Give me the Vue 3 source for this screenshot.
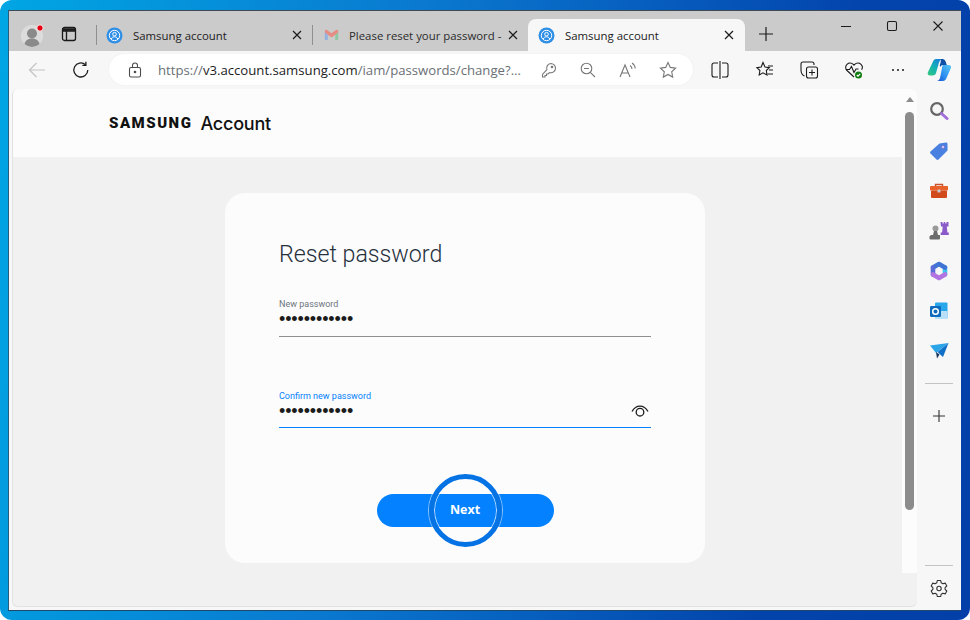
<script setup>
const rightTools = ['split', 'fav', 'coll', 'health', 'more']
</script>

<template>
  <div class="desktop">
    <div class="window">
      <div class="titlebar">
        <div class="avatar">
          <svg width="24" height="24" viewBox="0 0 24 24">
            <circle cx="11" cy="13" r="11" fill="#dcdcdc" />
            <circle cx="11" cy="10.5" r="5" fill="#8a8a8a" />
            <path d="M3.5 21c1-4 4-5.500 7.500-5.500s6.500 1.500 7.500 5.500a11 11 0 0 1-15 0z" fill="#8a8a8a" />
            <circle cx="19" cy="5" r="3.200" fill="#e60012" stroke="#f2f2f2" stroke-width="1" />
          </svg>
        </div>
        <svg class="workspace" width="16" height="16" viewBox="0 0 16 16" fill="none" stroke="#1a1a1a" stroke-width="1.300">
          <rect x="1.500" y="1.500" width="13" height="13" rx="2" />
          <path d="M1.500 5h13M5.500 5v9.500" />
          <path d="M1.500 3.500h13" stroke-width="2.500" />
        </svg>
        <i class="divider first"></i>
        <div class="tab tab-one">
          <svg class="favicon" width="17" height="17" viewBox="0 0 17 17">
            <circle cx="8.500" cy="8.500" r="8" fill="#2f8fe6" />
            <circle cx="8.500" cy="8.500" r="5.200" fill="none" stroke="#fff" stroke-width="1" />
            <circle cx="8.500" cy="7.200" r="1.800" fill="none" stroke="#fff" stroke-width="1" />
            <path d="M5.300 12c.6-1.600 1.800-2.200 3.200-2.200s2.600.6 3.200 2.200" fill="none" stroke="#fff" stroke-width="1" />
          </svg>
          <span class="tab-title">Samsung account</span>
          <svg class="close" width="12" height="12" viewBox="0 0 12 12" stroke="#1c1c1c" stroke-width="1.200"><path d="M2 2l8 8M10 2l-8 8" /></svg>
        </div>
        <i class="divider"></i>
        <div class="tab tab-two">
          <svg class="gmail" width="15" height="12" viewBox="0 0 15 12">
            <path d="M.8 2.500V10c0 .6.400 1 1 1h2V5.800z" fill="#94b2e0" />
            <path d="M14.200 2.500V10c0 .6-.4 1-1 1h-2V5.800z" fill="#8fc8a0" />
            <path d="M.8 3.200V2a1.400 1.400 0 0 1 2.300-1L7.500 4.200 11.900 1a1.400 1.400 0 0 1 2.300 1v1.200L11.200 5.800 7.500 8.600 3.800 5.800z" fill="#e58d83" />
          </svg>
          <span class="tab-title fade">Please reset your password -</span>
          <svg class="close" width="12" height="12" viewBox="0 0 12 12" stroke="#1c1c1c" stroke-width="1.200"><path d="M2 2l8 8M10 2l-8 8" /></svg>
        </div>
        <div class="tab tab-active">
          <svg class="favicon" width="17" height="17" viewBox="0 0 17 17">
            <circle cx="8.500" cy="8.500" r="8" fill="#2f8fe6" />
            <circle cx="8.500" cy="8.500" r="5.200" fill="none" stroke="#fff" stroke-width="1" />
            <circle cx="8.500" cy="7.200" r="1.800" fill="none" stroke="#fff" stroke-width="1" />
            <path d="M5.300 12c.6-1.600 1.800-2.200 3.200-2.200s2.600.6 3.200 2.200" fill="none" stroke="#fff" stroke-width="1" />
          </svg>
          <span class="tab-title">Samsung account</span>
          <svg class="close" width="12" height="12" viewBox="0 0 12 12" stroke="#1c1c1c" stroke-width="1.200"><path d="M2 2l8 8M10 2l-8 8" /></svg>
        </div>
        <svg class="newtab" width="16" height="16" viewBox="0 0 16 16" stroke="#1c1c1c" stroke-width="1.200"><path d="M8 1v14M1 8h14" /></svg>
        <div class="caption">
          <svg width="12" height="12" viewBox="0 0 12 12" stroke="#1c1c1c" stroke-width="1.100"><path d="M1 6.500h10" /></svg>
          <svg width="12" height="12" viewBox="0 0 12 12" fill="none" stroke="#1c1c1c" stroke-width="1.100"><rect x="1.500" y="1.500" width="9" height="9" rx="1.500" /></svg>
          <svg width="12" height="12" viewBox="0 0 12 12" stroke="#1c1c1c" stroke-width="1.100"><path d="M1.500 1.500l9 9M10.500 1.500l-9 9" /></svg>
        </div>
      </div>

      <div class="toolbar">
        <svg class="back" width="18" height="18" viewBox="0 0 18 18" fill="none" stroke="#c4c4c4" stroke-width="1.200"><path d="M17 9H1.500M8.500 2 1.500 9l7 7" /></svg>
        <svg class="reload" width="18" height="18" viewBox="0 0 18 18" fill="none" stroke="#1c1c1c" stroke-width="1.300"><path d="M15.800 9A7 7 0 1 1 13.500 3.800" /><path d="M13.900.8v3.500h-3.500" /></svg>
        <div class="address">
          <svg class="lock" width="14" height="16" viewBox="0 0 14 16" fill="none" stroke="#4c4c4c" stroke-width="1.100">
            <rect x="1.500" y="5.500" width="11" height="9.500" rx="1.500" />
            <path d="M4.500 5.500V3.500a2.500 2.500 0 0 1 5 0v2" />
            <circle cx="7" cy="10" r=".8" fill="#4c4c4c" />
          </svg>
          <span class="url"><span class="dim">https://</span>v3.account.samsung.com<span class="dim">/iam/passwords/change?...</span></span>
          <svg class="addr-icon key" width="16" height="16" viewBox="0 0 16 16" fill="none" stroke="#777" stroke-width="1.100"><path d="M9.800 1.500a4.700 4.700 0 0 1 4.700 4.700 4.700 4.700 0 0 1-6 4.400L7 12H5.500v1.500H4V15H1.500v-2.500l4.400-4.800a4.700 4.700 0 0 1 3.900-6.200z" /><circle cx="11" cy="5" r=".8" /></svg>
          <svg class="addr-icon zoomout" width="16" height="16" viewBox="0 0 16 16" fill="none" stroke="#777" stroke-width="1.100"><circle cx="6.500" cy="6.500" r="5.300" /><path d="M10.300 10.300 15 15M4 6.500h5" /></svg>
          <svg class="addr-icon aloud" width="18" height="16" viewBox="0 0 18 16" fill="none" stroke="#777" stroke-width="1.100"><path d="M1 15 6 3l5 12M2.800 11h6.400M11 3.500c1.300.8 2 2 2 3.400M13 1c2 1.300 3.200 3.200 3.200 5.600" /></svg>
          <svg class="addr-icon star" width="18" height="18" viewBox="0 0 18 18" fill="none" stroke="#777" stroke-width="1.100"><path d="m9 1.500 2.300 4.900 5.300.7-3.900 3.700 1 5.300L9 13.500l-4.700 2.600 1-5.300-3.900-3.700 5.300-.7z" /></svg>
        </div>
        <div class="tools">
          <svg v-for="t in rightTools" :key="t" width="20" height="20" viewBox="0 0 20 20" fill="none" stroke="#1c1c1c" stroke-width="1.100">
            <template v-if="t === 'split'">
              <path d="M8 3H4a2 2 0 0 0-2 2v10a2 2 0 0 0 2 2h4M12 3h4a2 2 0 0 1 2 2v10a2 2 0 0 1-2 2h-4M10 1v18" />
            </template>
            <template v-else-if="t === 'fav'">
              <path d="M8 2.500 10 7l4.300.6-3 2.900.7 4.500L8 12.800 4.200 15l.7-4.500-3-2.900L6.200 7z" />
              <path d="M13 6h5M14 10h4M12.500 14h5.500" />
            </template>
            <template v-else-if="t === 'coll'">
              <rect x="7.500" y="7" width="11" height="11" rx="2" />
              <path d="M13 9.500v6M10 12.500h6" />
              <path d="M15 5V4a2 2 0 0 0-2-2H4a2 2 0 0 0-2 2v6c0 3 1 5 3.500 6" />
            </template>
            <template v-else-if="t === 'health'">
              <path d="M10 17 3 10.500a4.300 4.300 0 0 1 0-6.200 4.500 4.500 0 0 1 6.300.1l.7.7.7-.7a4.500 4.500 0 0 1 6.300-.1 4.300 4.300 0 0 1 .6 5.400" />
              <path d="M2 9.500h3.500l2-3 2.500 6 2-3.500h2.500" />
              <circle cx="14.500" cy="15" r="3.500" fill="#107c10" stroke="none" />
              <path d="m12.800 15 1.200 1.200 2.200-2.300" stroke="#fff" />
            </template>
            <template v-else>
              <circle cx="5" cy="10" r="1" fill="#1c1c1c" stroke="none" />
              <circle cx="10" cy="10" r="1" fill="#1c1c1c" stroke="none" />
              <circle cx="15" cy="10" r="1" fill="#1c1c1c" stroke="none" />
            </template>
          </svg>
        </div>
        <svg class="copilot" width="25" height="24" viewBox="0 0 25 24">
          <defs>
            <linearGradient id="cpA" x1="0" y1="1" x2=".8" y2="0"><stop offset="0" stop-color="#35c87a" /><stop offset=".55" stop-color="#12b0b8" /><stop offset="1" stop-color="#1a7fd8" /></linearGradient>
            <linearGradient id="cpB" x1="1" y1="0" x2="0" y2="1"><stop offset="0" stop-color="#58c8f5" /><stop offset=".6" stop-color="#2a8cf0" /><stop offset="1" stop-color="#1450c8" /></linearGradient>
          </defs>
          <path d="M9 1h6c-1.500.5-2.500 2-3 3.500L9 15c-.6 1.800-2 2.500-3.500 2.500H3C1.200 17.500.2 16 .8 14.500L6 3.500C6.600 2 7.500 1 9 1z" fill="url(#cpA)" />
          <path d="M13.500 1h2c1.500 0 2.500 1 3 2.300L19.800 7H16c-1.500 0-2.200.9-2.500 2l-.8-1.500 1-3.500c.2-1.200.3-2.300-.2-3z" fill="#0f4fa8" />
          <path d="M16 7h5.500c1.800 0 3 1 2.500 2.800l-4.500 10.300c-.7 1.800-2 2.900-3.500 2.900H9.500c1.800 0 3-1 3.500-2.900l2-10.100c.2-1.300.4-2.400 1-3z" fill="url(#cpB)" />
        </svg>
      </div>

      <div class="main">
        <div class="page">
          <div class="viewport">
            <div class="content">
              <header class="site-header">
                <span class="logo">SAMSUNG</span>
                <span class="logo-sub">Account</span>
              </header>
              <section class="stage">
                <form class="card" @submit.prevent>
                  <h1>Reset password</h1>
                  <label class="field">
                    <span class="field-label">New password</span>
                    <input type="password" value="123456789012" readonly />
                  </label>
                  <label class="field focus">
                    <span class="field-label">Confirm new password</span>
                    <input type="password" value="123456789012" readonly />
                    <svg class="eye" width="18" height="12" viewBox="0 0 18 12" fill="none" stroke="#1c1c1c" stroke-width="1.300">
                      <path d="M1 6.500C3 3 5.800 1.200 9 1.200S15 3 17 6.500" />
                      <circle cx="9" cy="7.200" r="3.800" />
                    </svg>
                  </label>
                  <div class="actions">
                    <button class="next" type="submit">Next</button>
                    <span class="ring"></span>
                  </div>
                </form>
              </section>
            </div>
            <div class="scroll">
              <i class="arrow"></i>
              <i class="thumb"></i>
            </div>
          </div>
        </div>

        <aside class="sidebar">
          <svg width="20" height="20" viewBox="0 0 20 20" fill="none">
            <circle cx="8" cy="8" r="5.800" stroke="#666" stroke-width="2.200" />
            <path d="m12.500 12.500 5.500 5" stroke="#a06fd8" stroke-width="3" stroke-linecap="round" />
          </svg>
          <svg width="20" height="20" viewBox="0 0 20 20">
            <path d="M10.500 2.500 17 1.500c1 0 1.500.5 1.500 1.500v6.500L9.500 18.500c-.6.600-1.400.6-2 0L1.500 12.500c-.6-.6-.6-1.400 0-2z" fill="#4a80e0" />
            <circle cx="14" cy="6" r="1.500" fill="#d8e4fa" stroke="#8458c8" stroke-width=".6" />
          </svg>
          <svg width="20" height="20" viewBox="0 0 20 20">
            <path d="M6.500 5V3.500h7V5" fill="none" stroke="#c8502a" stroke-width="1.400" />
            <rect x="1" y="5" width="18" height="4.500" rx=".8" fill="#e8622a" />
            <rect x="2" y="9.500" width="16" height="7.500" rx="1" fill="#d04a1c" />
            <rect x="8.500" y="8.500" width="3" height="3" rx=".6" fill="#c8c8d4" />
          </svg>
          <svg width="20" height="20" viewBox="0 0 20 20">
            <circle cx="6.500" cy="7.500" r="3" fill="#9a9a9a" />
            <path d="M5 10h3l1 4h2v3.500a1 1 0 0 1-1 1H1.500a1 1 0 0 1-1-1V15.500c0-.8 1.200-1.500 3.500-1.500z" fill="#6c6c6c" />
            <path d="M11.500 1h2v1.500h1.200V1h1.600v1.500h1.200V1h2v4.500h-1.700l.6 6h1.400V14h-8.100v-2.500h1.400l.6-6h-1.700z" fill="#8a5bc8" />
          </svg>
          <svg width="20" height="20" viewBox="0 0 20 20" fill="none" stroke-width="4.600" stroke-linecap="round" stroke-linejoin="round">
            <path d="M16 6.500v7" stroke="#3cc4ee" />
            <path d="M4 6.500 10 3l6 3.500" stroke="#3f74d4" />
            <path d="M4 6.500v7" stroke="#5a6cd8" />
            <path d="M16 13.500 10 17l-6-3.500" stroke="#b274e0" />
          </svg>
          <svg width="20" height="20" viewBox="0 0 20 20">
            <rect x="6" y="1.500" width="12.500" height="16" rx="1" fill="#28a8ea" />
            <path d="M6 10h12.500v7a1 1 0 0 1-1 1H7a1 1 0 0 1-1-1z" fill="#b8e0f8" />
            <rect x="1" y="5" width="11" height="11" rx="1.200" fill="#0f6cbd" />
            <circle cx="6.500" cy="10.500" r="2.800" fill="none" stroke="#fff" stroke-width="1.500" />
          </svg>
          <svg width="20" height="20" viewBox="0 0 20 20">
            <path d="M1 4.500 19.500 2 7 12z" fill="#2ba4e8" />
            <path d="M19.500 2 14 16l-5.500-5z" fill="#1070c8" />
            <path d="m7 11 1 6.500 2.500-4z" fill="#16365c" />
          </svg>
          <i class="side-rule rule-a"></i>
          <svg class="side-plus" width="14" height="14" viewBox="0 0 14 14" stroke="#333" stroke-width="1.100"><path d="M7 1v12M1 7h12" /></svg>
          <i class="side-rule rule-b"></i>
          <svg class="gear" width="18" height="18" viewBox="0 0 18 18" fill="none" stroke="#333" stroke-width="1.100">
            <path d="M7.300 1.500h3.400l.5 2.300 1.700 1 2.300-.7 1.600 2.900-1.700 1.600v1.800l1.700 1.600-1.600 2.900-2.300-.7-1.700 1-.5 2.300H7.300l-.5-2.300-1.700-1-2.300.7-1.600-2.900 1.700-1.600V8.600L1.200 7l1.600-2.900 2.300.7 1.700-1z" stroke-linejoin="round" />
            <circle cx="9" cy="9.500" r="2.200" />
          </svg>
        </aside>
      </div>
    </div>
  </div>
</template>

<style>
html, body { margin: 0; background: #fff; }
</style>

<style scoped>
.desktop {
  box-sizing: border-box;
  width: 970px;
  height: 620px;
  padding: 10px 9px 10px 8px;
  border-radius: 12px;
  background: linear-gradient(100deg, #00a6e4 0%, #0a78cf 40%, #0344ac 80%, #033fa8 100%);
  font-family: "Open Sans", "Noto Sans", sans-serif;
  overflow: hidden;
}
.window {
  height: 100%;
  display: flex;
  flex-direction: column;
  background: #f7f7f7;
  border-top: 1px solid #3f4a55;
  border-left: 1px solid #2a5c7c;
  box-sizing: border-box;
  box-shadow: 0 1px 0 #1d4a6a;
}
.titlebar {
  height: 40px;
  flex: none;
  display: flex;
  align-items: flex-end;
  background: #cbcbcb;
  position: relative;
}
.avatar { width: 24px; height: 24px; margin: 0 0 4px 12px; }
.workspace { margin: 0 0 9px 16px; }
.divider { width: 1px; height: 20px; background: #8f8f8f; margin-bottom: 6px; flex: none; }
.divider.first { margin-left: 19px; }
.tab {
  height: 32px;
  display: flex;
  align-items: center;
  box-sizing: border-box;
  flex: none;
}
.tab-one { width: 215px; padding: 0 9px 0 9px; }
.tab-two { width: 215px; padding: 0 9px 0 11px; }
.tab-active {
  width: 217px;
  padding: 0 10px 0 10px;
  background: #f7f7f7;
  border-radius: 8px 8px 0 0;
}
.favicon { flex: none; }
.gmail { flex: none; margin-right: 10px; }
.tab-title {
  font-size: 11.400px;
  color: #1c1c1c;
  margin-left: 10px;
  flex: 1;
  white-space: nowrap;
  overflow: hidden;
}
.gmail + .tab-title { margin-left: 0; }
.fade { color: #2b2b2b; }
.close { flex: none; }
.newtab { margin: 0 0 9px 13px; }
.caption {
  position: absolute;
  right: 17px;
  top: 9px;
  display: flex;
  gap: 34px;
}
.toolbar {
  height: 38px;
  padding-bottom: 1px;
  box-sizing: border-box;
  flex: none;
  display: flex;
  align-items: center;
  background: #f7f7f7;
}
.back { margin-left: 19px; }
.reload { margin-left: 26px; }
.address {
  margin-left: 19px;
  width: 584px;
  height: 31px;
  border-radius: 16px;
  background: #fff;
  display: flex;
  align-items: center;
  box-shadow: 0 0 2px rgba(0, 0, 0, .06);
  position: relative;
  flex: none;
}
.lock { margin-left: 19px; flex: none; }
.url {
  margin-left: 16px;
  font-size: 13.170px;
  color: #1c1c1c;
  white-space: nowrap;
  width: 371px;
  flex: none;
}
.dim { color: #6a6f75; }
.addr-icon { flex: none; }
.key { margin-left: 12px; }
.zoomout { margin-left: 23px; }
.aloud { margin-left: 23px; }
.star { margin-left: 22px; }
.tools {
  display: flex;
  gap: 24.500px;
  margin-left: 17px;
}
.copilot { margin-left: 19px; }
.main { flex: 1; display: flex; min-height: 0; }
.page {
  flex: none;
  width: 905px;
  margin: 0 0 3px 3px;
  background: #f1f1f1;
  border: 1px solid #e2e2e2;
  border-top: none;
  border-right: none;
  border-radius: 6px;
  box-sizing: border-box;
  overflow: hidden;
}
.viewport { height: 484px; display: flex; }
.content { flex: 1; display: flex; flex-direction: column; min-width: 0; }
.site-header {
  height: 68px;
  background: #fcfcfc;
  display: flex;
  align-items: center;
  padding-left: 96px;
  flex: none;
}
.logo {
  font-family: Roboto, sans-serif;
  font-weight: 900;
  font-size: 15px;
  letter-spacing: 1.500px;
  color: #111;
}
.logo-sub {
  font-family: Inter, sans-serif;
  font-weight: 500;
  font-size: 18px;
  color: #111;
  margin-left: 8px;
  letter-spacing: -.2px;
}
.stage { flex: 1; padding: 36px 0 0 212px; }
.card {
  width: 480px;
  height: 370px;
  box-sizing: border-box;
  border-radius: 20px;
  background: #fcfcfc;
  padding: 45px 54px 0;
}
h1 {
  margin: 0;
  font-family: Roboto, sans-serif;
  font-weight: 300;
  font-size: 23.200px;
  line-height: 32px;
  color: #25303c;
}
.field {
  display: block;
  position: relative;
  height: 41px;
  border-bottom: 1px solid #8f8f8f;
  margin-top: 25px;
}
.field.focus { height: 40px; border-bottom-color: #0381fe; margin-top: 50px; }
.field-label {
  display: block;
  font-family: Roboto, sans-serif;
  font-size: 9px;
  line-height: 12px;
  padding-top: 3px;
  color: #6d7580;
}
.focus .field-label { color: #0381fe; }
input {
  display: block;
  width: 100%;
  border: none;
  outline: none;
  background: transparent;
  padding: 0;
  margin: 1px 0 0;
  height: 16px;
  font-family: "Liberation Sans", sans-serif;
  font-size: 18px;
  letter-spacing: -.13px;
  color: #1c1c1c;
}
.eye { position: absolute; right: 2px; bottom: 10px; }
.actions {
  position: relative;
  display: flex;
  justify-content: center;
  margin-top: 66px;
}
.next {
  width: 177px;
  height: 33px;
  border: none;
  border-radius: 17px;
  background: #0381fe;
  color: #fff;
  font-family: "Open Sans", sans-serif;
  font-size: 12.500px;
  font-weight: 700;
  padding: 0 0 2px;
}
.ring {
  position: absolute;
  left: 150px;
  top: -20px;
  width: 73px;
  height: 73px;
  box-sizing: border-box;
  border: 5px solid #0673e5;
  border-radius: 50%;
  box-shadow: 0 0 0 1px rgba(255, 255, 255, .55), inset 0 0 0 1px rgba(255, 255, 255, .7);
  pointer-events: none;
}
.scroll {
  width: 15px;
  flex: none;
  background: #fcfcfc;
  display: flex;
  flex-direction: column;
  align-items: center;
}
.arrow {
  margin-top: 8px;
  width: 0;
  height: 0;
  border: 4.500px solid transparent;
  border-top: none;
  border-bottom: 5px solid #8c8c8c;
}
.thumb {
  margin-top: 10px;
  width: 9px;
  height: 398px;
  border-radius: 5px;
  background: #8c8c8c;
}
.sidebar {
  flex: 1;
  display: flex;
  flex-direction: column;
  align-items: center;
  gap: 20px;
  padding-top: 12px;
}
.side-rule { width: 28px; height: 1px; background: #c4c4c4; flex: none; }
.rule-a { margin-top: 2px; }
.side-plus { margin-top: 5px; }
.rule-b { margin-top: 122px; }
.gear { margin-top: -7px; }
</style>
